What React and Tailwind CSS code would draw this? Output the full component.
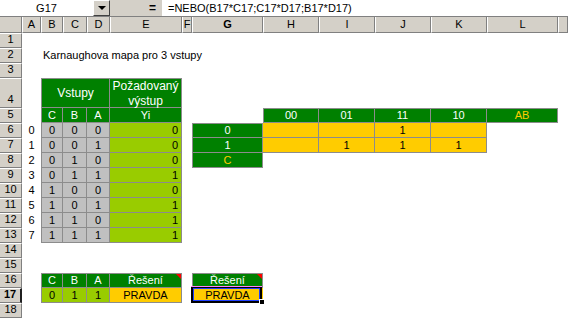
const COL = ['', 'col-start-1', 'col-start-2', 'col-start-3', 'col-start-4', 'col-start-5', 'col-start-6', 'col-start-7', 'col-start-8', 'col-start-9', 'col-start-10', 'col-start-11', 'col-start-12', 'col-start-13', 'col-start-14']
const ROW = ['row-start-1', 'row-start-2', 'row-start-3', 'row-start-4', 'row-start-5', 'row-start-6', 'row-start-7', 'row-start-8', 'row-start-9', 'row-start-10', 'row-start-11', 'row-start-12', 'row-start-13', 'row-start-14', 'row-start-15', 'row-start-16', 'row-start-17', 'row-start-18', 'row-start-19']
const LETTERS = ['A', 'B', 'C', 'D', 'E', 'F', 'G', 'H', 'I', 'J', 'K', 'L', '']

const GREEN = 'bg-[#008000] text-white justify-center'
const GRAY = 'bg-[#c0c0c0] text-black justify-center'
const LIME = 'bg-[#99cc00] text-black'
const YELLOW = 'bg-[#ffcc00] text-black justify-center'
const B = 'border-r border-b border-[#8c8c8c]'

const truth = [
  [0, 0, 0, 0],
  [0, 0, 1, 0],
  [0, 1, 0, 0],
  [0, 1, 1, 1],
  [1, 0, 0, 0],
  [1, 0, 1, 1],
  [1, 1, 0, 1],
  [1, 1, 1, 1],
]

function Cell({ c, r, className = '', children }) {
  return <div className={`${COL[c]} ${ROW[r]} flex items-center min-w-0 ${className}`}>{children}</div>
}

function Comment() {
  return <span className="absolute top-0 right-0 w-0 h-0 border-t-[5px] border-l-[5px] border-t-[#ff0000] border-l-transparent" />
}

export default function App() {
  return (
    <div className="w-[568px] h-[318px] overflow-hidden bg-white font-['Liberation_Sans',Arial,sans-serif] text-[11px] leading-none text-black">
      {/* formula bar */}
      <div className="flex h-[17px] border-b border-[#808080] bg-[#d4d0c8]">
        <div className="w-[93px] h-[16px] bg-white flex items-center justify-center">G17</div>
        <div className="w-[17px] h-[16px] border border-t-white border-l-white border-r-[#404040] border-b-[#404040] flex items-center justify-center">
          <span className="w-0 h-0 border-l-[4px] border-r-[4px] border-t-[4px] border-l-transparent border-r-transparent border-t-black" />
        </div>
        <div className="w-[52px] flex items-center justify-end pr-[6px] font-bold text-[12px]">=</div>
        <div className="flex-1 h-[16px] bg-white flex items-center pl-[6px] whitespace-nowrap">=NEBO(B17*C17;C17*D17;B17*D17)</div>
      </div>

      {/* sheet */}
      <div className="grid grid-cols-[22px_19px_22px_24px_23px_72px_10px_71px_56px_56px_56px_56px_71px_1fr] grid-rows-[16px_15px_15px_15px_30px_repeat(14,15px)]">
        <Cell c={1} r={0} className="bg-[#d4d0c8] border-r border-b border-[#808080]" />
        {LETTERS.map((l, i) => (
          <Cell key={l + i} c={i + 2} r={0} className={`bg-[#d4d0c8] justify-center border-l border-l-white border-r border-r-[#808080] border-b border-b-[#808080] ${l === 'G' ? 'font-bold' : ''}`}>
            {l}
          </Cell>
        ))}
        {Array.from({ length: 18 }, (_, i) => i + 1).map((n) => (
          <Cell key={n} c={1} r={n} className={`bg-[#d4d0c8] justify-center items-end! pb-[2px] border-t border-t-white border-b border-b-[#808080] border-r ${n === 17 ? 'font-bold border-r-2 border-r-[#202020]' : 'border-r-[#808080]'}`}>
            {n}
          </Cell>
        ))}

        <Cell c={3} r={2} className="col-span-6 pl-[2px] whitespace-nowrap">Karnaughova mapa pro 3 vstupy</Cell>

        {/* truth table */}
        <Cell c={3} r={4} className={`col-span-3 ${GREEN} ${B} border-t border-l text-[12px]`}>Vstupy</Cell>
        <Cell c={6} r={4} className={`${GREEN} ${B} border-t flex-col justify-center! gap-[3px] text-[12px]`}>
          <span>Požadovaný</span>
          <span>výstup</span>
        </Cell>
        {['C', 'B', 'A'].map((l, i) => (
          <Cell key={l} c={i + 3} r={5} className={`${GREEN} ${B} ${i === 0 ? 'border-l' : ''}`}>{l}</Cell>
        ))}
        <Cell c={6} r={5} className={`${GREEN} ${B}`}>Yi</Cell>
        {truth.map((row, i) => (
          <div key={i} className="contents">
            <Cell c={2} r={i + 6} className="justify-center">{i}</Cell>
            {row.slice(0, 3).map((v, j) => (
              <Cell key={j} c={j + 3} r={i + 6} className={`${GRAY} ${B} ${j === 0 ? 'border-l' : ''}`}>{v}</Cell>
            ))}
            <Cell c={6} r={i + 6} className={`${LIME} ${B} justify-end pr-[3px]`}>{row[3]}</Cell>
          </div>
        ))}

        {/* karnaugh map */}
        {['00', '01', '11', '10'].map((l, i) => (
          <Cell key={l} c={i + 9} r={5} className={`${GREEN} ${B} border-t ${i === 0 ? 'border-l' : ''}`}>{l}</Cell>
        ))}
        <Cell c={13} r={5} className={`bg-[#008000] text-[#ffcc00] justify-center ${B} border-t`}>AB</Cell>
        {[['', '', '1', ''], ['', '1', '1', '1']].map((row, i) => (
          <div key={i} className="contents">
            <Cell c={8} r={i + 6} className={`${GREEN} ${B} border-l ${i === 0 ? 'border-t' : ''}`}>{i}</Cell>
            {row.map((v, j) => (
              <Cell key={j} c={j + 9} r={i + 6} className={`${YELLOW} ${B}`}>{v}</Cell>
            ))}
          </div>
        ))}
        <Cell c={8} r={8} className={`bg-[#008000] text-[#ffcc00] justify-center ${B} border-l`}>C</Cell>

        {/* solution */}
        {['C', 'B', 'A'].map((l, i) => (
          <Cell key={l} c={i + 3} r={16} className={`${GREEN} ${B} border-t ${i === 0 ? 'border-l' : ''}`}>{l}</Cell>
        ))}
        <Cell c={6} r={16} className={`${GREEN} ${B} border-t relative`}>
          Řešení
          <Comment />
        </Cell>
        {[0, 1, 1].map((v, i) => (
          <Cell key={i} c={i + 3} r={17} className={`${LIME} justify-center ${B} ${i === 0 ? 'border-l' : ''}`}>{v}</Cell>
        ))}
        <Cell c={6} r={17} className={`${YELLOW} ${B}`}>PRAVDA</Cell>

        <Cell c={8} r={16} className={`${GREEN} ${B} border-t border-l relative`}>
          Řešení
          <Comment />
        </Cell>
        <Cell c={8} r={17} className={`${YELLOW} relative`}>
          <span className="relative">PRAVDA</span>
          <span className="absolute left-[-1px] right-[1px] top-[-2px] bottom-0 border-2 border-black" />
          <span className="absolute left-[-1px] right-[1px] top-[-2px] h-px bg-[#ff80ff]" />
          <span className="absolute left-[1px] right-[3px] top-0 bottom-[2px] border border-[#2040ff]" />
          <span className="absolute right-[-2px] bottom-[-2px] w-[6px] h-[6px] bg-black border border-white" />
        </Cell>
      </div>
    </div>
  )
}
